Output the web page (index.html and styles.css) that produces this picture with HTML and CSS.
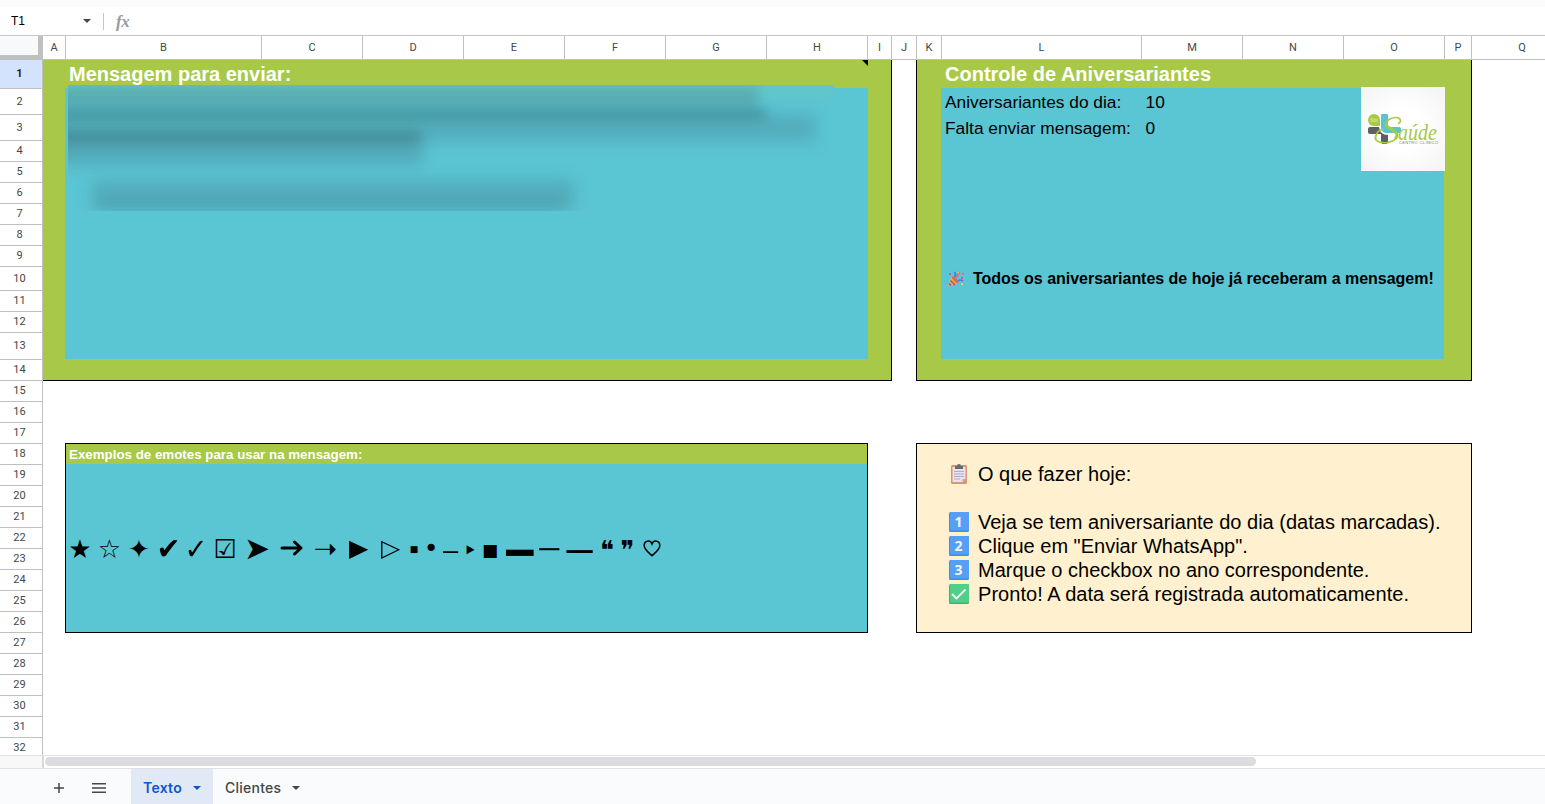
FILE: index.html
```html
<!DOCTYPE html>
<html lang="pt-BR">
<head>
<meta charset="utf-8">
<title>Texto</title>
<link rel="stylesheet" href="styles.css">
</head>
<body>
<div class="app">
  <div class="toolbar-edge"></div>
  <div class="formula-bar">
    <span class="cell-name">T1</span>
    <svg class="caret" width="8" height="4" viewBox="0 0 8 4"><path d="M0 0h8L4 4z" fill="#444746"/></svg>
    <span class="bar-divider"></span>
    <span class="fx">fx</span>
  </div>
  <div class="col-heads">
    <div class="corner"></div>
    <div class="col a">A</div><div class="col b">B</div><div class="col">C</div><div class="col">D</div><div class="col">E</div><div class="col">F</div><div class="col">G</div><div class="col">H</div><div class="col i">I</div><div class="col j">J</div><div class="col j">K</div><div class="col l">L</div><div class="col">M</div><div class="col">N</div><div class="col">O</div><div class="col p">P</div><div class="col">Q</div>
  </div>
  <div class="main">
    <div class="row-heads">
      <div class="row r1">1</div><div class="row r26">2</div><div class="row r26">3</div><div class="row">4</div><div class="row">5</div><div class="row">6</div><div class="row">7</div><div class="row">8</div><div class="row">9</div><div class="row r24">10</div><div class="row">11</div><div class="row">12</div><div class="row r27">13</div><div class="row">14</div><div class="row">15</div><div class="row">16</div><div class="row">17</div><div class="row">18</div><div class="row">19</div><div class="row">20</div><div class="row">21</div><div class="row">22</div><div class="row">23</div><div class="row">24</div><div class="row">25</div><div class="row">26</div><div class="row">27</div><div class="row">28</div><div class="row">29</div><div class="row">30</div><div class="row">31</div><div class="row">32</div>
    </div>
    <div class="sheet">
      <section class="panel message">
        <h2 class="panel-title">Mensagem para enviar:</h2>
        <span class="note-mark"></span>
        <div class="panel-body"></div>
        <div class="smudge">
          <i class="s s1"></i><i class="s s2"></i><i class="s s3"></i><i class="s s4"></i><i class="s s5"></i><i class="s s6"></i><i class="s s7"></i>
        </div>
      </section>
      <section class="panel control">
        <h2 class="panel-title">Controle de Aniversariantes</h2>
        <div class="panel-body">
          <div class="stats">
            <span>Aniversariantes do dia:</span><span>10</span>
            <span>Falta enviar mensagem:</span><span>0</span>
          </div>
          <div class="done">
            <svg class="party" width="18" height="16" viewBox="0 0 18 16">
              <path d="M.5 15.500 4.500 5l7.500 7.500z" fill="#f5a83b"/><path d="M3.500 9.500l4.500 4.500M2 12.500l2 2" stroke="#7c5aa0" stroke-width="1.200"/>
              <ellipse cx="8.200" cy="8.800" rx="1.600" ry="4.500" transform="rotate(-44 8.200 8.800)" fill="#c9764f"/>
              <path d="M7.500 6Q9.500 4 7.500 1" fill="none" stroke="#427de0" stroke-width="1.600"/>
              <path d="M9.500 7.500q0-4 3.500-6" fill="none" stroke="#ee5b91" stroke-width="1.600"/>
              <path d="M11 10q2-2 5 0" fill="none" stroke="#427de0" stroke-width="1.600"/>
              <path d="M2 2h2v2H2zM14 6h2v2h-2z" fill="#ef4b91"/><path d="M10.500 1h1.500v1.500h-1.500zM14 12h2v2h-2z" fill="#fac24e"/><path d="M15 2h1.500v1.500H15z" fill="#ef4b91"/>
            </svg>
            <span>Todos os aniversariantes de hoje já receberam a mensagem!</span>
          </div>
        </div>
        <div class="logo">
          <svg width="84" height="84" viewBox="0 0 84 84">
            <path d="M20 28q0-1 1-1h5q1 0 1 1v12h11q2 0 2 2v2q0 2-2 2H26q-6 0-6-6z" fill="#58c4d2"/>
            <path d="M7 42q0-2 2-2h9q1 8 9 8v7q0 2-2 2h-3q-2 0-2-2v-8H9q-2 0-2-2z" fill="#5d6063"/>
            <path d="M7 33a6 6 0 0 1 12 0v6h-6a6 6 0 0 1-6-6z" fill="#a6ca45"/>
            <text x="9" y="35" class="logo-small">Sin</text>
            <path d="M37 36.500c4-1 3-6-2-6-6 0-11 4-10 8 1 3 11 5 11 10 0 5-9 8-14 7-6 0-9-3-7-7 1-4 4-6 8-6" fill="none" stroke="#a6ca45" stroke-width="1.700"/>
            <path d="M25 38c1 3 11 5 11 10 0 2-1 3-2 4" fill="none" stroke="#a6ca45" stroke-width="2.800"/>
            <text x="37" y="53" class="logo-word" textLength="39" lengthAdjust="spacingAndGlyphs">aúde</text>
            <text x="38" y="57" class="logo-tag" textLength="39">CENTRO CLÍNICO</text>
          </svg>
        </div>
      </section>
      <section class="panel emotes">
        <h3 class="emotes-title">Exemplos de emotes para usar na mensagem:</h3>
        <div class="emote-row">
          <span class="e w28 star">★</span><span class="e w31 star">☆</span><span class="e w28 star">✦</span><span class="e w31 check">✔</span><span class="e w24 check thin">✓</span><span class="e w34 box">☑</span><span class="e w30 head">➤</span><span class="e w39"><svg width="24" height="18" viewBox="0 0 24 18" role="img" aria-label="→"><path d="M2 9h19M14.500 3l6.500 6-6.500 6" fill="none" stroke="#000" stroke-width="3" stroke-linecap="round" stroke-linejoin="round"/></svg></span><span class="e w29 big">➝</span><span class="e w37 tri">▶</span><span class="e w27 tri">▷</span><span class="e w20 tiny">■</span><span class="e w14 dot">•</span><span class="e w25 dash1">–</span><span class="e w14 small-tri">‣</span><span class="e w26 square">■</span><span class="e w33 bar">▬</span><span class="e w26 dash2">─</span><span class="e w35 dash3">—</span><span class="e w20 quote">❝</span><span class="e w21 quote">❞</span><span class="e w28"><svg class="heart" width="18" height="17" viewBox="0 0 18 17" role="img" aria-label="♡"><path d="M9 15.800C6 13 1.200 9.500 1.200 5.500 1.200 .2 7.500-.3 9 4 10.500-.3 16.800 .2 16.800 5.500c0 4-4.800 7.500-7.800 10.300z" fill="none" stroke="#000" stroke-width="1.500"/></svg></span>
        </div>
      </section>
      <section class="panel todo">
        <div class="step">
          <svg width="22" height="22" viewBox="0 0 22 22"><rect x="3" y="2" width="16" height="19" rx="1.500" fill="#dc9568"/><path d="M4.500 4h13v12l-3 3h-10z" fill="#e8e2f0"/><path d="M17.500 16l-3 3v-3z" fill="#b6a9c5"/><path d="M7 3h2q0-2 2-2t2 2h2v3H7z" fill="#686b78"/><path d="M6 8.500h10M6 11h10M6 13.500h10M6 16h6" stroke="#b4adbd" stroke-width="1"/></svg>
          <span>O que fazer hoje:</span>
        </div>
        <div class="step blank"></div>
        <div class="step"><svg width="22" height="22" viewBox="0 0 22 22"><rect x="1" y="1" width="20" height="20" rx="1.500" fill="#438ce2"/><rect x="2" y="1" width="19" height="18.500" rx="1" fill="#559ff5"/><text x="10.500" y="16" class="key">1</text></svg><span>Veja se tem aniversariante do dia (datas marcadas).</span></div>
        <div class="step"><svg width="22" height="22" viewBox="0 0 22 22"><rect x="1" y="1" width="20" height="20" rx="1.500" fill="#438ce2"/><rect x="2" y="1" width="19" height="18.500" rx="1" fill="#559ff5"/><text x="10.500" y="16" class="key">2</text></svg><span>Clique em "Enviar WhatsApp".</span></div>
        <div class="step"><svg width="22" height="22" viewBox="0 0 22 22"><rect x="1" y="1" width="20" height="20" rx="1.500" fill="#438ce2"/><rect x="2" y="1" width="19" height="18.500" rx="1" fill="#559ff5"/><text x="10.500" y="16" class="key">3</text></svg><span>Marque o checkbox no ano correspondente.</span></div>
        <div class="step last"><svg width="22" height="22" viewBox="0 0 22 22"><rect x="1" y="1" width="20" height="20" rx="1.500" fill="#36b873"/><rect x="2" y="1" width="19" height="18.500" rx="1" fill="#50cf88"/><path d="M4 11 8.500 15.500 17.500 6.500" fill="none" stroke="#f5f0fa" stroke-width="1.900"/></svg><span>Pronto! A data será registrada automaticamente.</span></div>
      </section>
    </div>
  </div>
  <div class="scroll-row"><div class="scroll-corner"></div><div class="scroll-thumb"></div></div>
  <footer class="tabs">
    <svg class="add" width="10" height="10" viewBox="0 0 10 10"><path d="M5 0v10M0 5h10" stroke="#444746" stroke-width="1.500"/></svg>
    <svg class="list" width="14" height="10" viewBox="0 0 14 10"><path d="M0 .75h14M0 5h14M0 9.250h14" stroke="#444746" stroke-width="1.500"/></svg>
    <div class="tab active"><span class="tab-name">Texto</span><svg width="8" height="4" viewBox="0 0 8 4"><path d="M0 0h8L4 4z" fill="#0b57d0"/></svg></div>
    <div class="tab"><span class="tab-name">Clientes</span><svg width="8" height="4" viewBox="0 0 8 4"><path d="M0 0h8L4 4z" fill="#444746"/></svg></div>
  </footer>
</div>
</body>
</html>
```

FILE: styles.css
```css
* { box-sizing: border-box; }
body { margin: 0; font-family: "Liberation Sans", Arial, sans-serif; color: #000; }
.app { width: 1545px; height: 804px; display: flex; flex-direction: column; overflow: hidden; background: #fff; }
.app > * { flex-shrink: 0; }
svg { display: block; flex: none; }

.toolbar-edge { height: 7px; background: #f9fbfd; }
.formula-bar { height: 29px; border-bottom: 1px solid #c7c7c7; display: flex; align-items: center; padding-left: 11px; }
.cell-name { width: 72px; font: 12px "Liberation Sans", sans-serif; color: #000; padding-bottom: 1px; }
.bar-divider { width: 1px; height: 17px; background: #c7c7c7; margin: 0 12px; }
.fx { font: italic bold 17px "Liberation Serif", serif; color: #989a9d; letter-spacing: -.5px; padding-top: 1px; }

.col-heads { height: 24px; display: flex; border-bottom: 1px solid #c0c0c0; }
.corner { width: 43px; height: 24px; background: #f8f9fa; border-right: 5px solid #c0c0c0; border-bottom: 5px solid #c0c0c0; flex: none; }
.col { width: 101px; flex: none; border-right: 1px solid #c0c0c0; text-align: center; font: 11px/23px Roboto, sans-serif; color: #444746; }
.col.a { width: 23px; }
.col.b { width: 196px; }
.col.i { width: 24px; }
.col.j { width: 25px; }
.col.l { width: 200px; }
.col.p { width: 27px; }

.main { height: 695px; display: flex; overflow: hidden; }
.row-heads { width: 43px; flex: none; border-right: 1px solid #c0c0c0; }
.row { height: 21px; border-bottom: 1px solid #c0c0c0; display: flex; align-items: center; justify-content: center; padding: 0 3px 2px 0; font: 11px Roboto, sans-serif; color: #444746; }
.row.r1 { height: 29px; background: #d3e3fd; font-weight: 700; color: #1f1f1f; }
.row.r26 { height: 26px; padding-bottom: 0; }
.row.r24 { height: 24px; padding-bottom: 0; }
.row.r27 { height: 27px; }

.sheet { flex: none; display: grid; grid-template-columns: 849px 556px; grid-template-rows: 321px 190px; column-gap: 24px; row-gap: 62px; }
.panel { position: relative; border: 1px solid #000; }
.message, .control { background: #a7c947; border-top: 0; padding-bottom: 21px; display: flex; flex-direction: column; }
.message { border-left: 0; padding-left: 22px; padding-right: 23px; }
.control { padding-left: 24px; padding-right: 27px; }
.panel-title { margin: 0; height: 28px; padding-left: 4px; font-size: 20px; line-height: 29px; color: #fff; white-space: nowrap; }
.panel-body { flex: 1; background: #5ac5d3; }
.note-mark { position: absolute; right: 23px; top: 0; width: 6px; height: 6px; background: #000; clip-path: polygon(0 0, 100% 0, 100% 100%); }

/* redacted message: soft strokes clipped to the region they cover */
.smudge { position: absolute; left: 25px; top: 25px; width: 766px; height: 126px; overflow: hidden; background: linear-gradient(#63c6c6 0, #5ac5d3 22px); }
.s { position: absolute; left: -20px; filter: blur(6px); background: #3a7f8a; }
.s1 { top: 2px; height: 20px; width: 710px; background: #528f8f; opacity: .45; }
.s2 { top: 24px; height: 11px; width: 718px; opacity: .62; }
.s3 { top: 29px; height: 28px; width: 768px; background: #48808e; opacity: .34; filter: blur(8px) ; }
.s4 { top: 46px; height: 12px; width: 372px; opacity: .6; }
.s5 { top: 50px; height: 30px; width: 375px; background: #48808e; opacity: .38; filter: blur(8px); }
.s6 { left: 24px; top: 95px; height: 30px; width: 482px; background: #48808e; opacity: .36; filter: blur(8px); }
.s7 { left: 30px; top: 115px; height: 8px; width: 466px; opacity: .25; }

.stats { display: grid; grid-template-columns: 200.500px auto; grid-auto-rows: 26px; padding: 1px 0 0 4px; justify-content: start; line-height: 27px; font-size: 17.333px; }
.done { display: flex; align-items: center; height: 24px; margin-top: 126px; padding-left: 6px; font-size: 16px; font-weight: 700; white-space: nowrap; letter-spacing: -.025px; }
.done span { margin-left: 8px; }
.logo { position: absolute; left: 444px; top: 27px; background: radial-gradient(circle, #fff 35%, #f3f3f3); }
.logo-word { font: italic 23px "Liberation Serif", serif; fill: #a6ca45; }
.logo-small { font: italic 6px "Liberation Serif", serif; fill: #e8f2c8; }
.logo-tag { font: 4px "Liberation Sans", sans-serif; fill: #777; }

.emotes { margin-left: 22px; width: 803px; background: #5ac5d3; }
.emotes-title { margin: 0; height: 20px; padding-left: 3px; font-size: 13.333px; line-height: 21px; color: #fff; background: #a7c947; }
.emote-row { display: flex; height: 168px; align-items: center; }
.e { flex: none; display: flex; align-items: center; justify-content: center; height: 30px; font: 25px/30px "DejaVu Sans", sans-serif; white-space: nowrap; }
.w14 { width: 14px; } .w20 { width: 20px; } .w21 { width: 21px; } .w24 { width: 24px; } .w25 { width: 25px; }
.w26 { width: 26px; } .w27 { width: 27px; } .w28 { width: 28px; } .w29 { width: 29px; } .w30 { width: 30px; }
.w31 { width: 31px; } .w33 { width: 33px; } .w34 { width: 34px; } .w35 { width: 35px; } .w37 { width: 37px; } .w39 { width: 39px; }
.star { font-size: 26px; padding-top: 2px; }
.check { transform: scale(1.15, 1.2); padding-top: 2px; }
.thin { font-size: 24px; }
.box { font-size: 26px; padding-top: 1px; }
.head { font-size: 31px; }
.big { font-size: 28px; padding-top: 2px; }
.tri { transform: scaleY(.95); }
.tiny { font-size: 9px; padding-top: 1px; }
.dot { padding-top: 2px; }
.small-tri { font-size: 24px; padding-top: 6px; }
.square { font-size: 17px; padding-top: 3px; }
.bar { transform: scale(1.45, .68); padding-top: 9px; }
.dash1 { transform: scaleX(1.5); padding-top: 5px; }
.dash2 { transform: scaleX(1.3); padding-top: 4px; }
.dash3 { font-size: 27px; transform: scale(1.08, 1.5); padding-top: 1px; }
.quote { font-size: 26px; padding-top: 4px; }

.todo { background: #fff1cf; padding: 18px 0 0 31px; }
.step { height: 24px; display: flex; align-items: center; font-size: 20px; line-height: 24px; white-space: nowrap; }
.step span { margin-left: 8px; }
.step.last { letter-spacing: .04px; }
.key { font: bold 14px "Open Sans", sans-serif; fill: #f8f4ff; text-anchor: middle; }

.scroll-row { height: 14px; border-top: 1px solid #e1e1e1; border-bottom: 1px solid #e1e1e1; display: flex; align-items: flex-start; }
.scroll-corner { width: 44px; height: 12px; background: #f8f8f8; border-right: 2px solid #d9d9d9; }
.scroll-thumb { width: 1211px; height: 9px; margin: 1px 0 0 1px; border-radius: 5px; background: #dadce0; }
.tabs { height: 35px; background: #f9fbfd; display: flex; align-items: center; padding-left: 54px; }
.add, .list { margin-top: 2px; }
.list { margin-left: 28px; margin-right: 25px; }
.tab { height: 35px; display: flex; align-items: center; gap: 11px; padding: 2px 12px 0; font: 500 14px Inter, sans-serif; letter-spacing: .25px; color: #444746; }
.tab.active { width: 82px; background: #e1e9f7; color: #0b57d0; font-weight: 600; }
```
